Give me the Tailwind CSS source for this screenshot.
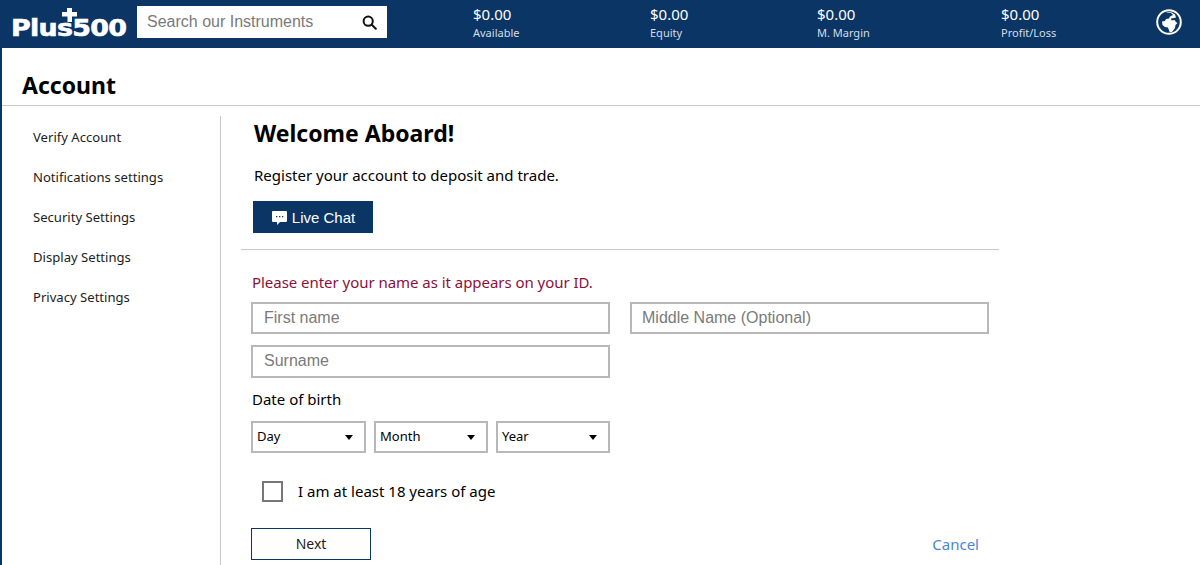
<!DOCTYPE html>
<html lang="en">
<head>
    <meta charset="UTF-8">
    <title>Plus500 Account</title>
    <script src="https://cdn.jsdelivr.net/npm/@tailwindcss/browser@4"></script>
</head>
<body class="h-[565px] overflow-hidden bg-white border-l-2 border-[#0b3565] font-['Noto_Sans',sans-serif] text-black">
    <!-- Header -->
    <header class="h-12 bg-[#0b3565] flex items-center text-white">
        <div class="relative w-[125px] ml-[10px] h-12 shrink-0">
            <span class="absolute -left-px top-[13px] origin-left scale-x-[1.17] font-['DejaVu_Sans',sans-serif] font-bold text-[23px] leading-[30px] tracking-[-0.6px] [-webkit-text-stroke:0.6px_white]">Plus500</span>
            <svg class="absolute left-[49px] top-[8px]" width="18" height="14" viewBox="0 0 18 14"><path fill="#fff" d="M6 0h5v4h5v4.500h-5V14H6.500V8.500H1V4h5z"/></svg>
        </div>
        <div class="w-[250px] h-8 bg-white flex items-center justify-between pl-[10px] pr-[10px] mb-[4px] shrink-0">
            <span class="font-['Liberation_Sans',sans-serif] text-base text-[#7a7a7a]">Search our Instruments</span>
            <svg width="15" height="15" viewBox="0 0 15 15" fill="none" stroke="#111" stroke-width="2"><circle cx="6.2" cy="6.2" r="4.6"/><path d="M9.8 9.800l4 4" stroke-linecap="round"/></svg>
        </div>
        <div class="flex-1 grid grid-cols-[177px_167px_184px_150px] ml-[86px] mb-[2px] leading-none">
            <div><div class="text-[15px] leading-[19px]">$0.00</div><div class="text-[11px] leading-[18px] text-[#d5dde8]">Available</div></div>
            <div><div class="text-[15px] leading-[19px]">$0.00</div><div class="text-[11px] leading-[18px] text-[#d5dde8]">Equity</div></div>
            <div><div class="text-[15px] leading-[19px]">$0.00</div><div class="text-[11px] leading-[18px] text-[#d5dde8]">M. Margin</div></div>
            <div><div class="text-[15px] leading-[19px]">$0.00</div><div class="text-[11px] leading-[18px] text-[#d5dde8]">Profit/Loss</div></div>
        </div>
        <svg class="mr-[18px] mb-[4px] shrink-0" width="26" height="26" viewBox="0 0 26 26"><circle cx="13" cy="13" r="11.800" fill="#0b3565" stroke="#fff" stroke-width="2"/><path fill="#fff" d="M10 3.500l5 .5 2 2-3 1.500-1 2-3 .5-1 2-3 .5 .5 3.500 2.500 2 3 .5 1 3 1 2 2-.5 3-4 .5-3 2-2-1-.5-2-2.500-3 .5-.5-2 3-.5 2-.5-1-3-3-2-4-.5z"/></svg>
    </header>

    <!-- Title -->
    <div class="pl-5 h-[58px] border-b border-[#c8c8c8] flex items-end">
        <h1 class="text-[23px] font-bold leading-[34px] mb-[3px]">Account</h1>
    </div>

    <div class="flex mt-[10px]">
        <!-- Sidebar -->
        <nav class="w-[219px] h-[460px] border-r border-[#c8c8c8] pl-[31px] pt-[2px] shrink-0 flex flex-col text-[13.1px] text-[#1c1c1c]">
            <a class="h-10 flex items-center">Verify Account</a>
            <a class="h-10 flex items-center">Notifications settings</a>
            <a class="h-10 flex items-center">Security Settings</a>
            <a class="h-10 flex items-center">Display Settings</a>
            <a class="h-10 flex items-center">Privacy Settings</a>
        </nav>

        <!-- Form -->
        <main class="w-[779px] pl-5 -mt-px">
            <div class="pl-[12px]">
                <h2 class="pl-px text-[23px] font-bold leading-[36px]">Welcome Aboard!</h2>
                <p class="pl-px text-[15px] leading-5 mt-[14px]">Register your account to deposit and trade.</p>
                <button class="mt-4 w-[120px] h-8 pt-[2px] pl-px bg-[#0b3565] text-white flex items-center justify-center gap-[5px] font-['Liberation_Sans',sans-serif] text-[15px]">
                    <svg width="15" height="14" viewBox="0 0 15 14"><path fill="#fff" d="M1 0h13a1 1 0 0 1 1 1v9a1 1 0 0 1-1 1H8l-3 3v-3H1a1 1 0 0 1-1-1V1a1 1 0 0 1 1-1z"/><path fill="#0b3565" d="M4 5h1.300v1.300H4zM7 5h1.300v1.300H7zM10 5h1.300v1.300H10z"/></svg>
                    Live Chat
                </button>
            </div>
            <hr class="w-[758px] border-[#c8c8c8] mt-4">
            <div class="pl-[10px]">
                <p class="pl-px text-[15px] leading-5 mt-[22px] text-[#8c0f3c] tracking-[-0.04px]">Please enter your name as it appears on your ID.</p>
                <div class="flex gap-5 mt-[10px]">
                    <div class="w-[359px] h-8 border-2 border-[#b8b8b8] pl-[11px] flex items-center font-['Liberation_Sans',sans-serif] text-base text-[#7a7a7a]">First name</div>
                    <div class="w-[359px] h-8 border-2 border-[#b8b8b8] pl-[10px] flex items-center font-['Liberation_Sans',sans-serif] text-base text-[#7a7a7a]">Middle Name (Optional)</div>
                </div>
                <div class="w-[359px] h-[33px] pb-px mt-[11px] border-2 border-[#b8b8b8] pl-[11px] flex items-center font-['Liberation_Sans',sans-serif] text-base text-[#7a7a7a]">Surname</div>
                <p class="pl-px text-[15px] leading-5 mt-[11px]">Date of birth</p>
                <div class="flex gap-2 mt-[12px] text-[13px]">
                    <div class="w-[115px] h-8 border-2 border-[#b8b8b8] px-[4px] flex items-center justify-between">Day<span class="w-0 h-0 mr-[7px] border-x-[4px] border-x-transparent border-t-[5px] border-t-black"></span></div>
                    <div class="w-[114px] h-8 border-2 border-[#b8b8b8] px-[4px] flex items-center justify-between">Month<span class="w-0 h-0 mr-[7px] border-x-[4px] border-x-transparent border-t-[5px] border-t-black"></span></div>
                    <div class="w-[114px] h-8 border-2 border-[#b8b8b8] px-[4px] flex items-center justify-between">Year<span class="w-0 h-0 mr-[7px] border-x-[4px] border-x-transparent border-t-[5px] border-t-black"></span></div>
                </div>
                <label class="flex items-center mt-[27px] ml-[11px] gap-[15px] text-[15px]">
                    <span class="w-[21px] h-[21px] border-2 border-[#777]"></span>
                    I am at least 18 years of age
                </label>
                <div class="flex items-center justify-between mt-[25px] w-[728px]">
                    <button class="w-[120px] h-8 border border-[#0b3565] text-sm text-[#222]">Next</button>
                    <a class="pt-[2px] text-[15px] text-[#4a86d8]">Cancel</a>
                </div>
            </div>
        </main>
    </div>
</body>
</html>
